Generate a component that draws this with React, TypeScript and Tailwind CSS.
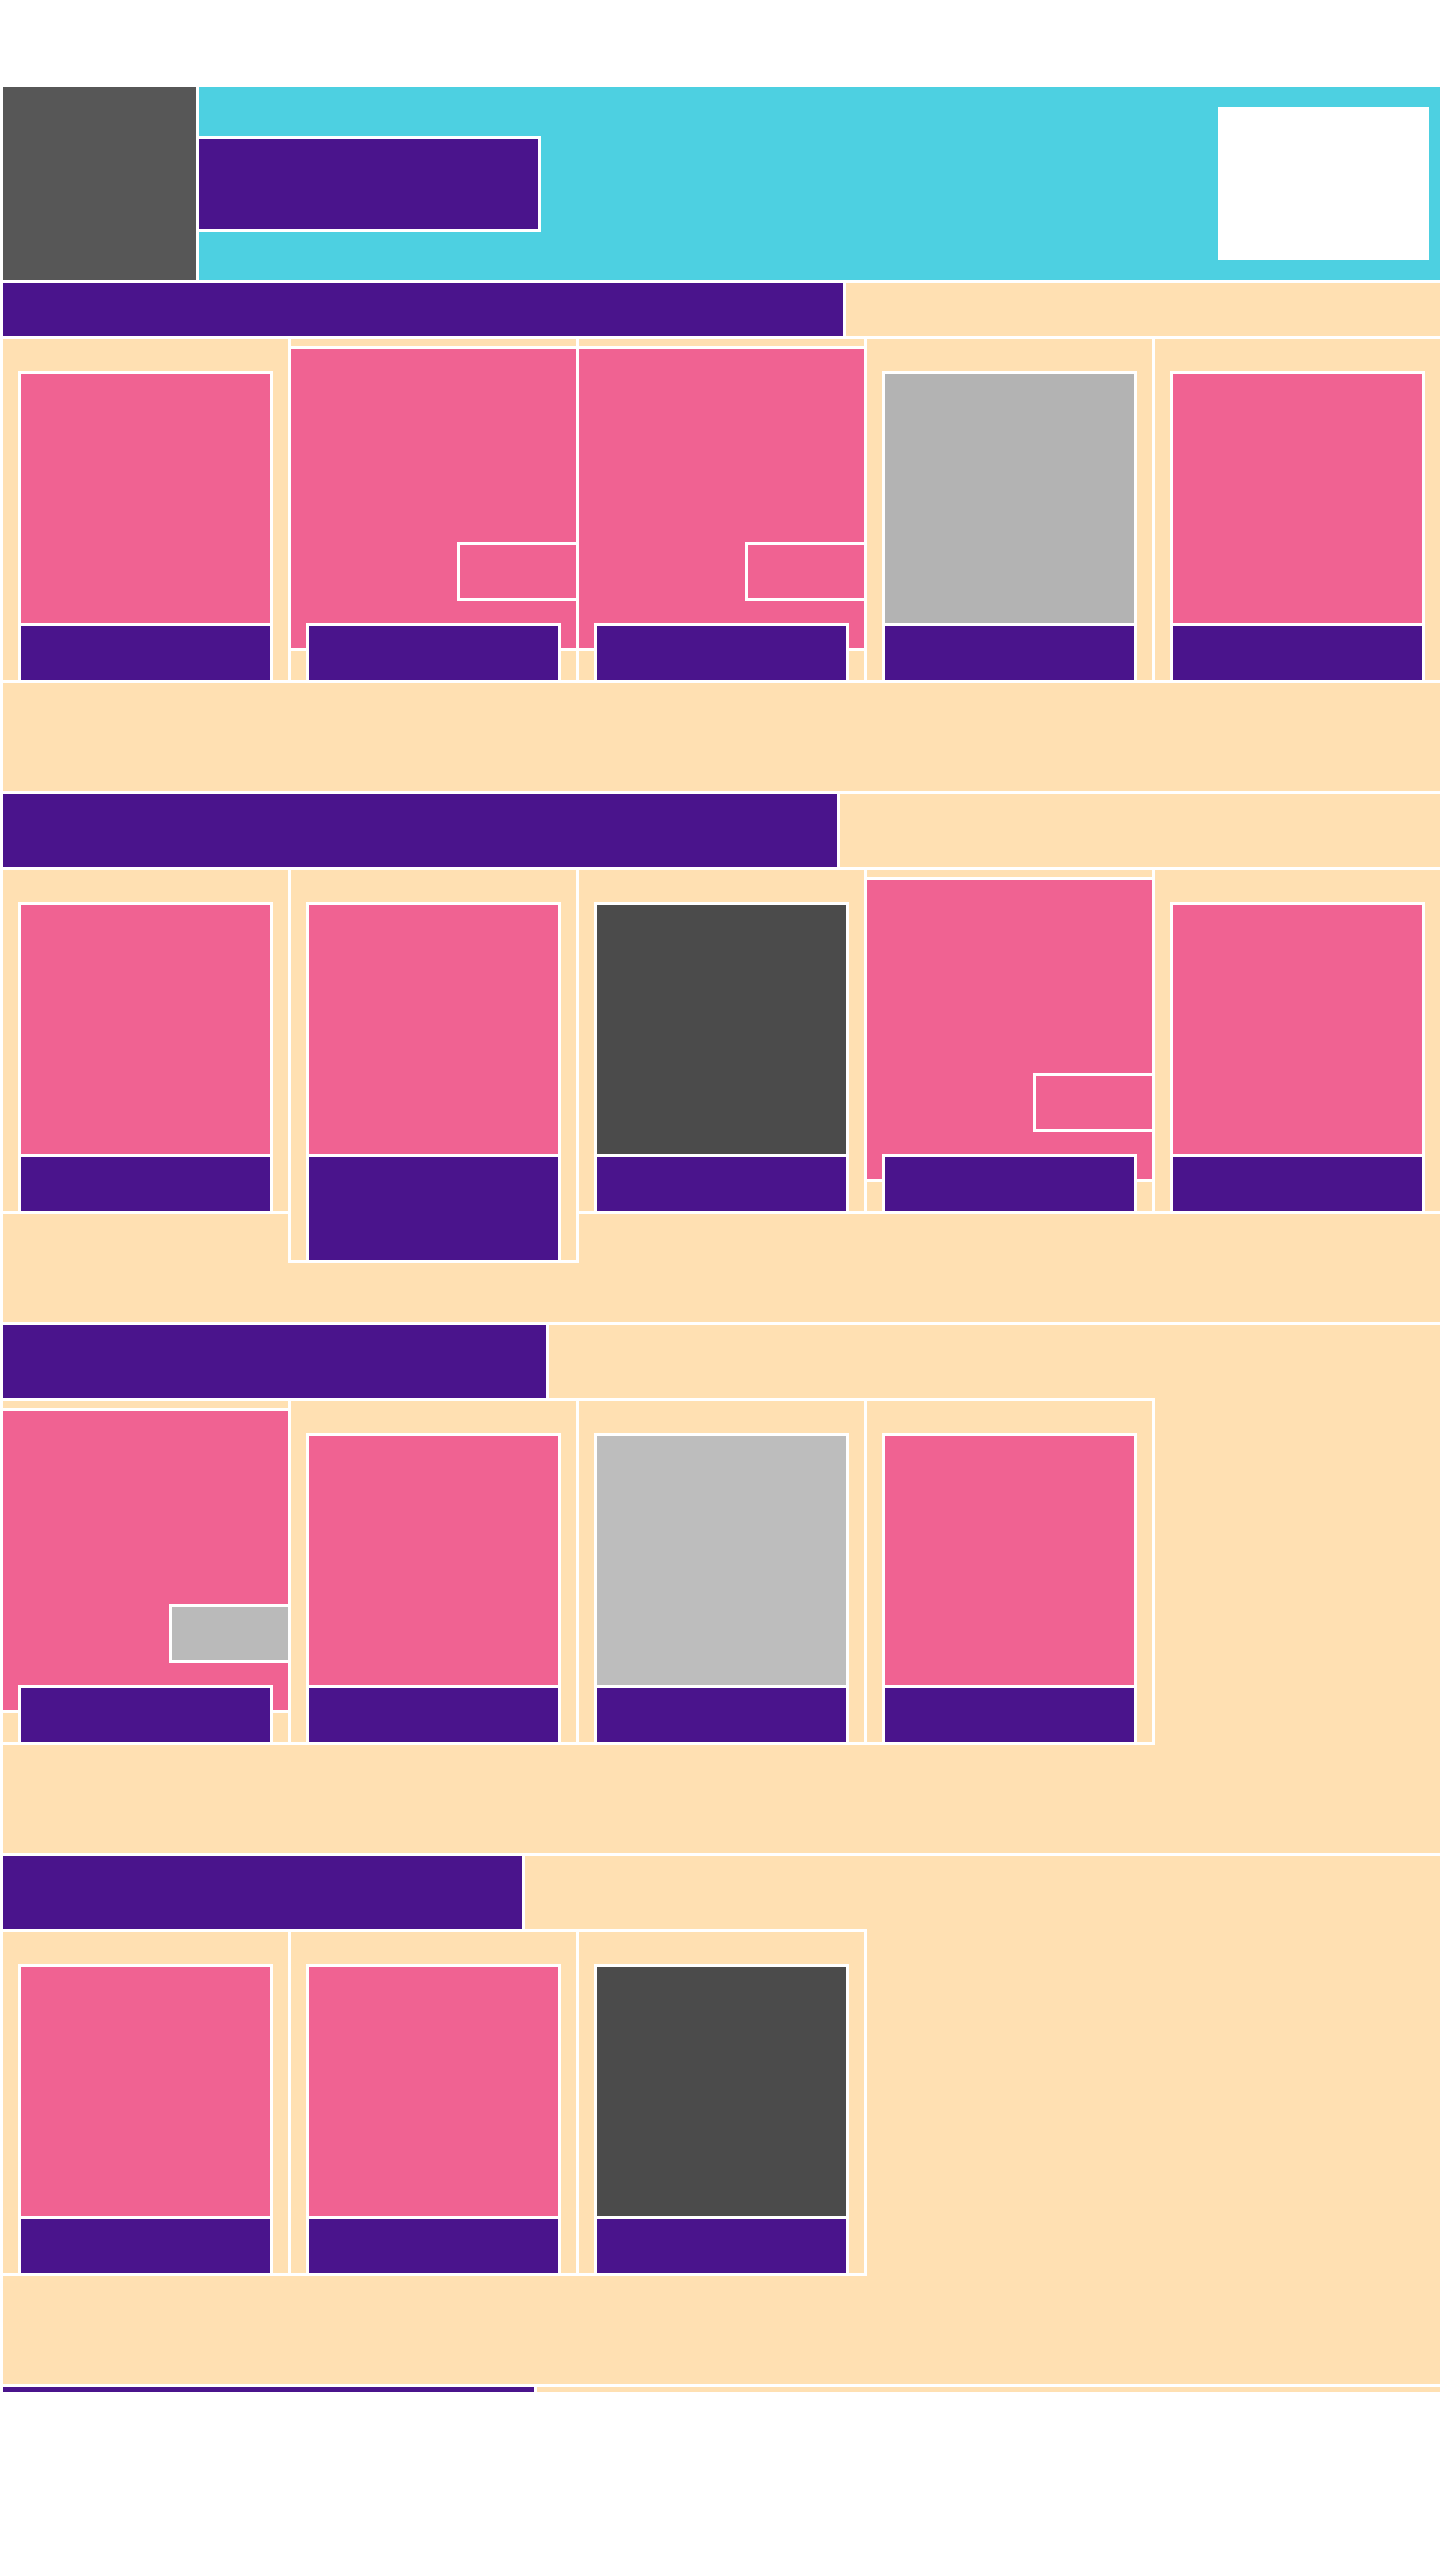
import clsx from "clsx";

type CardData = {
  img: string;
  hover?: boolean;
  small?: string;
  tall?: boolean;
};

const PINK = "bg-[#f06292]";

const sections: { title: string; height: string; cards: CardData[] }[] = [
  {
    title: "w-[843px]",
    height: "h-[53px]",
    cards: [
      { img: PINK },
      { img: PINK, hover: true, small: PINK },
      { img: PINK, hover: true, small: PINK },
      { img: "bg-[#b3b3b3]" },
      { img: PINK },
    ],
  },
  {
    title: "w-[837px]",
    height: "h-[73px]",
    cards: [
      { img: PINK },
      { img: PINK, tall: true },
      { img: "bg-[#4b4b4b]" },
      { img: PINK, hover: true, small: PINK },
      { img: PINK },
    ],
  },
  {
    title: "w-[546px]",
    height: "h-[73px]",
    cards: [
      { img: PINK, hover: true, small: "bg-[#bababa]" },
      { img: PINK },
      { img: "bg-[#bdbdbd]" },
      { img: PINK },
    ],
  },
  {
    title: "w-[522px]",
    height: "h-[73px]",
    cards: [{ img: PINK }, { img: PINK }, { img: "bg-[#4b4b4b]" }],
  },
];

function Card({ img, hover, small, tall }: CardData) {
  if (hover) {
    return (
      <div className="relative h-[341px] w-[285px] shrink-0 bg-[#ffe0b2]">
        <div className={clsx("absolute left-0 right-0 top-[7px] h-[305px] border-y-[3px] border-white", img)}>
          <div
            className={clsx(
              "absolute right-0 top-[193px] h-[59px] w-[119px] border-y-[3px] border-l-[3px] border-white",
              small
            )}
          />
        </div>
        <div className="absolute bottom-0 left-[15px] h-[57px] w-[255px] border-x-[3px] border-t-[3px] border-white bg-[#4a148c]" />
      </div>
    );
  }

  return (
    <div
      className={clsx(
        "flex w-[285px] shrink-0 flex-col bg-[#ffe0b2] px-[15px] pt-[32px]",
        tall ? "relative z-10 h-[390px] ring-[3px] ring-white" : "h-[341px]"
      )}
    >
      <div className="flex flex-col border-x-[3px] border-t-[3px] border-white">
        <div className={clsx("h-[249px]", img)} />
        <div
          className={clsx(
            "border-t-[3px] border-white bg-[#4a148c]",
            tall ? "h-[106px]" : "h-[57px]"
          )}
        />
      </div>
    </div>
  );
}

export default function App() {
  return (
    <div className="min-h-[2560px] bg-white pl-[3px] pt-[87px] font-['Liberation_Sans',sans-serif]">
      <div className="flex h-[2305px] flex-col gap-[3px] overflow-hidden">
        <header className="flex h-[193px] shrink-0 gap-[3px]">
          <div className="w-[193px] bg-[#575757]" />
          <div className="flex flex-1 items-center justify-between bg-[#4dd0e1] pr-[11px]">
            <div className="h-[96px] w-[342px] border-y-[3px] border-r-[3px] border-white bg-[#4a148c]" />
            <div className="h-[153px] w-[211px] bg-white" />
          </div>
        </header>

        {sections.map((section, i) => (
          <section key={i} className="shrink-0 bg-[#ffe0b2] pb-[108px]">
            <div className={clsx("flex", section.height)}>
              <div className={clsx("border-r-[3px] border-white bg-[#4a148c]", section.title)} />
            </div>
            <div
              className={clsx(
                "flex h-[347px] w-fit items-start gap-[3px] border-y-[3px] border-white bg-white",
                section.cards.length < 5 && "border-r-[3px]"
              )}
            >
              {section.cards.map((card, j) => (
                <Card key={j} {...card} />
              ))}
            </div>
          </section>
        ))}

        <section className="shrink-0 bg-[#ffe0b2]">
          <div className="flex h-[73px]">
            <div className="w-[534px] border-r-[3px] border-white bg-[#4a148c]" />
          </div>
        </section>
      </div>
    </div>
  );
}
